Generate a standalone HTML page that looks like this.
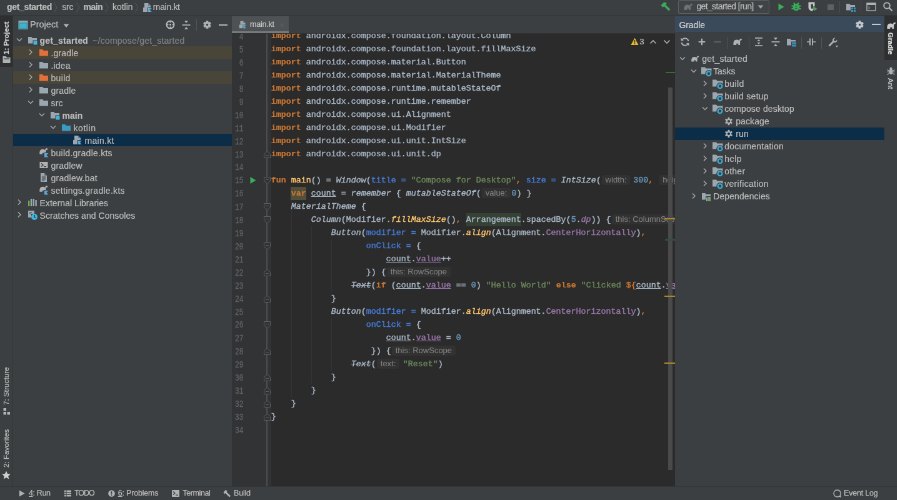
<!DOCTYPE html><html><head><meta charset="utf-8"><title>get_started - main.kt</title><style>
html,body{margin:0;padding:0;background:#3C3F41;overflow:hidden;}
body{width:897px;height:500px;position:relative;}
#r{position:absolute;left:0;top:0;width:1435.2px;height:800px;transform:scale(0.625);transform-origin:0 0;will-change:transform;background:#3C3F41;overflow:hidden;}
.ui{font-family:"Liberation Sans",sans-serif;-webkit-text-stroke:0.22px;}
.code{font-family:"Liberation Mono",monospace;font-size:13.3333px;line-height:21px;color:#A9B7C6;white-space:pre;-webkit-text-stroke:0.42px;}
.code i{font-style:italic}
.k{color:#CC7832;font-weight:bold;-webkit-text-stroke:0.15px}.c{color:#CC7832}.s{color:#6A8759}.n{color:#6897BB}.f{color:#FFC66D}.a{color:#467CDA}.p{color:#9876AA}.u{text-decoration:underline}.st{text-decoration:line-through}
.hint{display:inline-block;vertical-align:top;height:21px;}
.hb{display:inline-block;font-family:"Liberation Sans",sans-serif;font-size:13px;color:#808080;-webkit-text-stroke:0.1px;height:16px;line-height:15.5px;margin:2.2px 0 0 1.6px;padding:0 5.5px;background:#323232;border-radius:3px;vertical-align:top;}
</style></head><body><div id="r"><div id="w" style="position:absolute;left:0;top:0;width:1435.2px;height:800px;">
<div style="position:absolute;left:0px;top:0px;width:1435.2px;height:23.5px;background:#3C3F41;"></div>
<div style="position:absolute;left:0px;top:23.5px;width:1435.2px;height:1.6px;background:#323537;"></div>
<div class="ui" style="position:absolute;left:11px;top:1.0px;height:20px;line-height:20px;color:#BBBBBB;font-size:14px;white-space:pre;font-weight:bold;letter-spacing:-0.315px;">get_started</div>
<div class="ui" style="position:absolute;left:99.2px;top:1.0px;height:20px;line-height:20px;color:#BBBBBB;font-size:14px;white-space:pre;letter-spacing:-0.197px;">src</div>
<div class="ui" style="position:absolute;left:133.6px;top:1.0px;height:20px;line-height:20px;color:#BBBBBB;font-size:14px;white-space:pre;font-weight:bold;letter-spacing:-0.452px;">main</div>
<div class="ui" style="position:absolute;left:180.0px;top:1.0px;height:20px;line-height:20px;color:#BBBBBB;font-size:14px;white-space:pre;letter-spacing:-0.035px;">kotlin</div>
<div class="ui" style="position:absolute;left:244.8px;top:1.0px;height:20px;line-height:20px;color:#BBBBBB;font-size:14px;white-space:pre;letter-spacing:-0.321px;">main.kt</div>
<svg style="position:absolute;left:84.80000000000001px;top:3px;" width="8" height="18" viewBox="0 0 8 18"><path d="M1.500 1.500L6 9l-4.500 7.500" fill="none" stroke="#505355" stroke-width="1.200"/></svg>
<svg style="position:absolute;left:120.80000000000001px;top:3px;" width="8" height="18" viewBox="0 0 8 18"><path d="M1.500 1.500L6 9l-4.500 7.500" fill="none" stroke="#505355" stroke-width="1.200"/></svg>
<svg style="position:absolute;left:167.20000000000002px;top:3px;" width="8" height="18" viewBox="0 0 8 18"><path d="M1.500 1.500L6 9l-4.500 7.500" fill="none" stroke="#505355" stroke-width="1.200"/></svg>
<svg style="position:absolute;left:215.20000000000002px;top:3px;" width="8" height="18" viewBox="0 0 8 18"><path d="M1.500 1.500L6 9l-4.500 7.500" fill="none" stroke="#505355" stroke-width="1.200"/></svg>
<svg style="position:absolute;left:228.0px;top:3.5px;" width="16" height="16" viewBox="0 0 16 16"><path d="M3 1h6l4 4v3H3z" fill="#9AA7B0"/><path d="M9 1v4h4z" fill="#6d7980"/><rect x="1" y="8" width="7" height="7" fill="#9AA7B0"/><path d="M9 9h6l-3 3 3 3H9z" fill="#4A9CC9"/><path d="M9 9h3l-3 3zM9 15l3-3 0 3z" fill="#7DB8DD"/></svg>
<div style="position:absolute;left:0;top:-1px;">
<svg style="position:absolute;left:1056.0px;top:2.5px;" width="18" height="18" viewBox="0 0 18 18"><path d="M1.500 6.500L6.500 1.500l4.500 1.500L9 5.500 16.500 13l-2.500 2.500L6.500 8 4.500 9.800z" fill="#3DAA5C"/></svg>
<div style="position:absolute;left:1084.8px;top:1px;width:144.4px;height:19.500px;border:1px solid #5E6060;border-radius:2px;background:#414446;"></div>
<svg style="position:absolute;left:1092.8px;top:3.5px;" width="16" height="16" viewBox="0 0 16 16"><path d="M1.500 13C1 8 2.500 4.500 6.500 4.500C8.500 4.500 9.500 5 10.500 6C11 4 12.500 2.500 14 2.800C15.300 3.100 15.300 5 14.200 5.400C13.200 5.800 12.600 5.600 12 6.400C12.400 8 12.200 10 12 13L9.300 13L9.300 10.800L6.200 10.800L6.200 13Z" fill="#6E7173"/></svg>
<div class="ui" style="position:absolute;left:1114.4px;top:1.0px;height:20px;line-height:20px;color:#BBBBBB;font-size:14px;white-space:pre;letter-spacing:-0.633px;">get_started [run]</div>
<svg style="position:absolute;left:1211.2px;top:6.5px;" width="12" height="10" viewBox="0 0 12 10"><path d="M1.500 2.500h9L6 8z" fill="#9DA0A2"/></svg>
<svg style="position:absolute;left:1243.2px;top:3.5px;" width="14" height="16" viewBox="0 0 14 16"><path d="M2.500 2.500L11.500 8 2.500 13.500z" fill="#3BAD5A"/></svg>
<svg style="position:absolute;left:1266.4px;top:3px;" width="16" height="17" viewBox="0 0 16 17"><ellipse cx="8" cy="9.500" rx="5.300" ry="5.800" fill="#3BAD5A"/><path d="M4 2.500L6.500 5.500M12 2.500L9.500 5.500" stroke="#3BAD5A" stroke-width="2"/><path d="M0.500 7.500h3.500M12 7.500h3.500M0.500 12h3.500M12 12h3.500" stroke="#3BAD5A" stroke-width="1.900"/><rect x="6" y="7.200" width="4" height="1.300" fill="#2E6B3C"/><rect x="6" y="10.700" width="4" height="1.300" fill="#2E6B3C"/></svg>
<svg style="position:absolute;left:1292.0px;top:3px;" width="17" height="17" viewBox="0 0 17 17"><path d="M1.500 1.500h10v8.500c0 3-2.800 4.800-5 5.800C4.300 14.800 1.500 13 1.500 10z" fill="#C4C6C8"/><path d="M5.500 4.500h3.500v5c0 1.500-.8 2.300-1.800 2.900-1-.6-1.700-1.400-1.700-2.900z" fill="#3C3F41"/><path d="M10 8l6.500 4.200-6.500 4.200z" fill="#3BAD5A" stroke="#3C3F41" stroke-width="1"/></svg>
<div style="position:absolute;left:1324.0px;top:7.5px;width:9.5px;height:9.5px;background:#5E6163;"></div>
<div style="position:absolute;left:1343.2px;top:3px;width:1px;height:18px;background:#4A4D4F;"></div>
<svg style="position:absolute;left:1352.8000000000002px;top:3.5px;" width="16" height="16" viewBox="0 0 16 16"><path d="M1 3h5.2l1.6 2H15v8.5H1z" fill="#9AA7B0"/><rect x="8" y="8" width="8" height="8" fill="#3C3F41"/><rect x="9" y="9" width="3" height="3" fill="#3592C4"/><rect x="13" y="9" width="3" height="3" fill="#3592C4"/><rect x="9" y="13" width="3" height="3" fill="#3592C4"/><rect x="13" y="13" width="3" height="3" fill="#3592C4"/></svg>
<div style="position:absolute;left:1376.8000000000002px;top:3px;width:1px;height:18px;background:#4A4D4F;"></div>
<svg style="position:absolute;left:1385.6000000000001px;top:3.5px;" width="16" height="16" viewBox="0 0 16 16"><rect x="1" y="2" width="14" height="12" fill="none" stroke="#AFB1B3" stroke-width="1.400"/><rect x="1" y="2" width="14" height="3" fill="#AFB1B3"/><path d="M3.500 7.500L5.500 9.500l-2 2" stroke="#59A869" stroke-width="1.200" fill="none"/></svg>
<svg style="position:absolute;left:1412.0px;top:3px;" width="17" height="17" viewBox="0 0 17 17"><circle cx="7" cy="7" r="4.800" fill="none" stroke="#AFB1B3" stroke-width="2"/><path d="M10.500 10.500L15.500 15.500" stroke="#AFB1B3" stroke-width="2.400"/></svg>
</div>
<div style="position:absolute;left:0px;top:25px;width:20px;height:753.5px;background:#3C3F41;"></div>
<div style="position:absolute;left:20px;top:25px;width:1px;height:753.5px;background:#323232;"></div>
<div style="position:absolute;left:0px;top:25px;width:20px;height:81.5px;background:#2D2F30;"></div>
<div class="ui" style="position:absolute;left:10px;top:86.5px;height:20px;line-height:20px;margin-top:-10px;transform-origin:0 50%;transform:rotate(-90deg);color:#D0D0D0;font-size:11.5px;white-space:pre;font-weight:bold;">1: Project</div>
<svg style="position:absolute;left:3.5px;top:89px;" width="13" height="12" viewBox="0 0 13 12"><path d="M0.500 1h5l1.500 2H12.500v9H0.500z" fill="#AFB1B3"/><rect x="2" y="4.500" width="9" height="1.200" fill="#2D2F30"/></svg>
<div class="ui" style="position:absolute;left:10px;top:648px;height:20px;line-height:20px;margin-top:-10px;transform-origin:0 50%;transform:rotate(-90deg);color:#BBBBBB;font-size:11.5px;white-space:pre;letter-spacing:0.1px;">7: Structure</div>
<svg style="position:absolute;left:4.5px;top:652.5px;" width="11" height="11" viewBox="0 0 11 11"><rect x="0.500" y="0" width="4.500" height="4.500" fill="#AFB1B3"/><rect x="0.500" y="6" width="4.500" height="4.500" fill="#AFB1B3"/><rect x="6.500" y="6" width="4.500" height="4.500" fill="#AFB1B3"/></svg>
<div class="ui" style="position:absolute;left:10px;top:748px;height:20px;line-height:20px;margin-top:-10px;transform-origin:0 50%;transform:rotate(-90deg);color:#BBBBBB;font-size:11.5px;white-space:pre;letter-spacing:0.1px;">2: Favorites</div>
<svg style="position:absolute;left:3px;top:752.5px;" width="14" height="14" viewBox="0 0 14 14"><path d="M7 0.500l2 4.500 4.800.5-3.600 3.200 1 4.800L7 11l-4.200 2.500 1-4.800L0.200 5.500 5 5z" fill="#D0D0D0"/></svg>
<div style="position:absolute;left:21px;top:25px;width:350.2px;height:753.5px;background:#3C3F41;"></div>
<svg style="position:absolute;left:28.5px;top:31.5px;" width="16" height="16" viewBox="0 0 16 16"><rect x="1" y="1.500" width="14" height="13" fill="#3592A8"/><rect x="1" y="1.500" width="14" height="2.500" fill="#9AA7B0"/><rect x="2.500" y="5.500" width="11" height="7.500" fill="#3FB2CC"/><rect x="1" y="1.500" width="14" height="13" fill="none" stroke="#7FB7C6" stroke-width="1"/></svg>
<div class="ui" style="position:absolute;left:48px;top:29px;height:20px;line-height:20px;color:#BBBBBB;font-size:14.5px;white-space:pre;letter-spacing:0.02px;">Project</div>
<svg style="position:absolute;left:100px;top:35.5px;" width="12" height="10" viewBox="0 0 12 10"><path d="M1.500 2.500h9L6 8z" fill="#AFB1B3"/></svg>
<svg style="position:absolute;left:263.5px;top:31px;" width="17" height="17" viewBox="0 0 17 17"><circle cx="8.500" cy="8.500" r="6" fill="none" stroke="#B8BABC" stroke-width="2"/><circle cx="8.500" cy="8.500" r="1.400" fill="#B8BABC"/><path d="M8.500 2v3.500M8.500 11.500v3.500M2 8.500h3.500M11.500 8.500h3.500" stroke="#B8BABC" stroke-width="1.700"/></svg>
<svg style="position:absolute;left:290.40000000000003px;top:31.5px;" width="16" height="16" viewBox="0 0 16 16"><path d="M1.500 8h13" stroke="#AFB1B3" stroke-width="1.700"/><path d="M5 1.200h6L8 5zM5 14.800h6L8 11z" fill="#AFB1B3"/></svg>
<div style="position:absolute;left:314.08000000000004px;top:30px;width:1px;height:19px;background:#515456;"></div>
<svg style="position:absolute;left:323.8px;top:31.7px;" width="15" height="15" viewBox="0 0 16 16"><rect x="6.0" y="1.3" width="4.0" height="4" transform="rotate(0 8 8)" fill="#AFB1B3"/><rect x="6.0" y="1.3" width="4.0" height="4" transform="rotate(60 8 8)" fill="#AFB1B3"/><rect x="6.0" y="1.3" width="4.0" height="4" transform="rotate(120 8 8)" fill="#AFB1B3"/><rect x="6.0" y="1.3" width="4.0" height="4" transform="rotate(180 8 8)" fill="#AFB1B3"/><rect x="6.0" y="1.3" width="4.0" height="4" transform="rotate(240 8 8)" fill="#AFB1B3"/><rect x="6.0" y="1.3" width="4.0" height="4" transform="rotate(300 8 8)" fill="#AFB1B3"/><circle cx="8" cy="8" r="5.2" fill="#AFB1B3"/><circle cx="8" cy="8" r="1.8" fill="#3C3F41"/></svg>
<div style="position:absolute;left:350.08000000000004px;top:38.8px;width:14px;height:1.8px;background:#AFB1B3;"></div>
<svg style="position:absolute;left:23.200000000000003px;top:56.4px;" width="16" height="16" viewBox="0 0 16 16"><path d="M4 5.500L8 9.500l4-4" fill="none" stroke="#A4A7A9" stroke-width="1.500"/></svg>
<svg style="position:absolute;left:44.2px;top:55.8px;" width="16" height="16" viewBox="0 0 16 16"><path d="M1 3h5.2l1.6 2H15v8.5H1z" fill="#9AA7B0"/><rect x="8.5" y="8.5" width="7" height="7" fill="#3C3F41"/><rect x="9.5" y="9.5" width="6" height="6" fill="#40B6E0"/></svg>
<div class="ui" style="position:absolute;left:63.5px;top:54.6px;height:20px;line-height:20px;color:#BBBBBB;font-size:14px;white-space:pre;font-weight:bold;letter-spacing:0.194px;">get_started</div>
<div class="ui" style="position:absolute;left:148.3px;top:54.6px;height:20px;line-height:20px;color:#808080;font-size:14px;white-space:pre;letter-spacing:0.209px;">~/compose/get_started</div>
<div style="position:absolute;left:21px;top:74.4px;width:350.2px;height:20px;background:#4A4539;"></div>
<svg style="position:absolute;left:41.2px;top:76.4px;" width="16" height="16" viewBox="0 0 16 16"><path d="M6 3.500L10 7.500l-4 4" fill="none" stroke="#A4A7A9" stroke-width="1.500"/></svg>
<svg style="position:absolute;left:62.2px;top:75.80000000000001px;" width="16" height="16" viewBox="0 0 16 16"><path d="M1 3h5.2l1.6 2H15v8.5H1z" fill="#E2703A"/></svg>
<div class="ui" style="position:absolute;left:81.5px;top:74.60000000000001px;height:20px;line-height:20px;color:#BBBBBB;font-size:14px;white-space:pre;letter-spacing:0.17px;">.gradle</div>
<svg style="position:absolute;left:41.2px;top:96.4px;" width="16" height="16" viewBox="0 0 16 16"><path d="M6 3.500L10 7.500l-4 4" fill="none" stroke="#A4A7A9" stroke-width="1.500"/></svg>
<svg style="position:absolute;left:62.2px;top:95.80000000000001px;" width="16" height="16" viewBox="0 0 16 16"><path d="M1 3h5.2l1.6 2H15v8.5H1z" fill="#9AA7B0"/></svg>
<div class="ui" style="position:absolute;left:81.5px;top:94.60000000000001px;height:20px;line-height:20px;color:#BBBBBB;font-size:14px;white-space:pre;letter-spacing:0.168px;">.idea</div>
<div style="position:absolute;left:21px;top:114.4px;width:350.2px;height:20px;background:#4A4539;"></div>
<svg style="position:absolute;left:41.2px;top:116.4px;" width="16" height="16" viewBox="0 0 16 16"><path d="M6 3.500L10 7.500l-4 4" fill="none" stroke="#A4A7A9" stroke-width="1.500"/></svg>
<svg style="position:absolute;left:62.2px;top:115.80000000000001px;" width="16" height="16" viewBox="0 0 16 16"><path d="M1 3h5.2l1.6 2H15v8.5H1z" fill="#E2703A"/></svg>
<div class="ui" style="position:absolute;left:81.5px;top:114.60000000000001px;height:20px;line-height:20px;color:#BBBBBB;font-size:14px;white-space:pre;letter-spacing:0.321px;">build</div>
<svg style="position:absolute;left:41.2px;top:136.4px;" width="16" height="16" viewBox="0 0 16 16"><path d="M6 3.500L10 7.500l-4 4" fill="none" stroke="#A4A7A9" stroke-width="1.500"/></svg>
<svg style="position:absolute;left:62.2px;top:135.8px;" width="16" height="16" viewBox="0 0 16 16"><path d="M1 3h5.2l1.6 2H15v8.5H1z" fill="#9AA7B0"/></svg>
<div class="ui" style="position:absolute;left:81.5px;top:134.6px;height:20px;line-height:20px;color:#BBBBBB;font-size:14px;white-space:pre;letter-spacing:0.18px;">gradle</div>
<svg style="position:absolute;left:41.2px;top:156.4px;" width="16" height="16" viewBox="0 0 16 16"><path d="M4 5.500L8 9.500l4-4" fill="none" stroke="#A4A7A9" stroke-width="1.500"/></svg>
<svg style="position:absolute;left:62.2px;top:155.8px;" width="16" height="16" viewBox="0 0 16 16"><path d="M1 3h5.2l1.6 2H15v8.5H1z" fill="#9AA7B0"/></svg>
<div class="ui" style="position:absolute;left:81.5px;top:154.6px;height:20px;line-height:20px;color:#BBBBBB;font-size:14px;white-space:pre;letter-spacing:0.176px;">src</div>
<svg style="position:absolute;left:59.2px;top:176.4px;" width="16" height="16" viewBox="0 0 16 16"><path d="M4 5.500L8 9.500l4-4" fill="none" stroke="#A4A7A9" stroke-width="1.500"/></svg>
<svg style="position:absolute;left:80.2px;top:175.8px;" width="16" height="16" viewBox="0 0 16 16"><path d="M1 3h5.2l1.6 2H15v8.5H1z" fill="#9AA7B0"/><rect x="8.5" y="8.5" width="7" height="7" fill="#3C3F41"/><rect x="9.5" y="9.5" width="6" height="6" fill="#40B6E0"/></svg>
<div class="ui" style="position:absolute;left:99.5px;top:174.6px;height:20px;line-height:20px;color:#BBBBBB;font-size:14px;white-space:pre;font-weight:bold;letter-spacing:0.028px;">main</div>
<svg style="position:absolute;left:77.2px;top:196.4px;" width="16" height="16" viewBox="0 0 16 16"><path d="M4 5.500L8 9.500l4-4" fill="none" stroke="#A4A7A9" stroke-width="1.500"/></svg>
<svg style="position:absolute;left:98.2px;top:195.8px;" width="16" height="16" viewBox="0 0 16 16"><path d="M1 3h5.2l1.6 2H15v8.5H1z" fill="#3A9BC2"/></svg>
<div class="ui" style="position:absolute;left:117.5px;top:194.6px;height:20px;line-height:20px;color:#BBBBBB;font-size:14px;white-space:pre;letter-spacing:0.552px;">kotlin</div>
<div style="position:absolute;left:21px;top:214.4px;width:350.2px;height:20px;background:#0C2D48;"></div>
<svg style="position:absolute;left:116.2px;top:215.8px;" width="16" height="16" viewBox="0 0 16 16"><path d="M3 1h6l4 4v3H3z" fill="#9AA7B0"/><path d="M9 1v4h4z" fill="#6d7980"/><rect x="1" y="8" width="7" height="7" fill="#9AA7B0"/><path d="M9 9h6l-3 3 3 3H9z" fill="#4A9CC9"/><path d="M9 9h3l-3 3zM9 15l3-3 0 3z" fill="#7DB8DD"/></svg>
<div class="ui" style="position:absolute;left:135.5px;top:214.6px;height:20px;line-height:20px;color:#BBBBBB;font-size:14px;white-space:pre;letter-spacing:0.296px;">main.kt</div>
<svg style="position:absolute;left:62.2px;top:235.8px;" width="16" height="16" viewBox="0 0 16 16"><g transform="translate(0 -1.500) scale(0.95)"><path d="M1.500 13C1 8 2.500 4.500 6.500 4.500C8.500 4.500 9.500 5 10.500 6C11 4 12.500 2.500 14 2.800C15.300 3.100 15.300 5 14.200 5.400C13.200 5.800 12.600 5.600 12 6.400C12.400 8 12.200 10 12 13L9.300 13L9.300 10.800L6.200 10.800L6.200 13Z" fill="#AFB1B3"/></g><rect x="8" y="8" width="8" height="8" fill="#3C3F41"/><path d="M9 9h6.500l-3.200 3.200 3.200 3.300H9z" fill="#5AA7D8"/></svg>
<div class="ui" style="position:absolute;left:81.5px;top:234.6px;height:20px;line-height:20px;color:#BBBBBB;font-size:14px;white-space:pre;letter-spacing:0.264px;">build.gradle.kts</div>
<svg style="position:absolute;left:62.2px;top:255.8px;" width="16" height="16" viewBox="0 0 16 16"><rect x="1.5" y="3" width="13" height="10" fill="#AFB1B3"/><path d="M4 5.500L7 8l-3 2.500" stroke="#3C3F41" stroke-width="1.500" fill="none"/><rect x="8" y="10" width="4" height="1.300" fill="#3C3F41"/></svg>
<div class="ui" style="position:absolute;left:81.5px;top:254.6px;height:20px;line-height:20px;color:#BBBBBB;font-size:14px;white-space:pre;letter-spacing:0.196px;">gradlew</div>
<svg style="position:absolute;left:62.2px;top:275.79999999999995px;" width="16" height="16" viewBox="0 0 16 16"><path d="M3 1h6l4 4v10H3z" fill="#9AA7B0"/><path d="M9 1v4h4z" fill="#5f6b72"/><path d="M5 7h6M5 9h6M5 11h6M5 13h4" stroke="#3C3F41" stroke-width="1"/></svg>
<div class="ui" style="position:absolute;left:81.5px;top:274.59999999999997px;height:20px;line-height:20px;color:#BBBBBB;font-size:14px;white-space:pre;letter-spacing:0.254px;">gradlew.bat</div>
<svg style="position:absolute;left:62.2px;top:295.79999999999995px;" width="16" height="16" viewBox="0 0 16 16"><g transform="translate(0 -1.500) scale(0.95)"><path d="M1.500 13C1 8 2.500 4.500 6.500 4.500C8.500 4.500 9.500 5 10.500 6C11 4 12.500 2.500 14 2.800C15.300 3.100 15.300 5 14.200 5.400C13.200 5.800 12.600 5.600 12 6.400C12.400 8 12.200 10 12 13L9.300 13L9.300 10.800L6.200 10.800L6.200 13Z" fill="#AFB1B3"/></g><rect x="8" y="8" width="8" height="8" fill="#3C3F41"/><path d="M9 9h6.500l-3.200 3.200 3.200 3.300H9z" fill="#5AA7D8"/></svg>
<div class="ui" style="position:absolute;left:81.5px;top:294.59999999999997px;height:20px;line-height:20px;color:#BBBBBB;font-size:14px;white-space:pre;letter-spacing:0.292px;">settings.gradle.kts</div>
<svg style="position:absolute;left:23.200000000000003px;top:316.4px;" width="16" height="16" viewBox="0 0 16 16"><path d="M6 3.500L10 7.500l-4 4" fill="none" stroke="#A4A7A9" stroke-width="1.500"/></svg>
<svg style="position:absolute;left:44.2px;top:315.79999999999995px;" width="16" height="16" viewBox="0 0 16 16"><rect x="1" y="5" width="2.400" height="9" fill="#62B543"/><rect x="4.800" y="2" width="2.400" height="12" fill="#9AA7B0"/><rect x="8.600" y="2" width="2.400" height="12" fill="#9AA7B0"/><rect x="12.400" y="4" width="2.400" height="10" fill="#9AA7B0"/></svg>
<div class="ui" style="position:absolute;left:63.5px;top:314.59999999999997px;height:20px;line-height:20px;color:#BBBBBB;font-size:14px;white-space:pre;letter-spacing:0.037px;">External Libraries</div>
<svg style="position:absolute;left:23.200000000000003px;top:336.4px;" width="16" height="16" viewBox="0 0 16 16"><path d="M6 3.500L10 7.500l-4 4" fill="none" stroke="#A4A7A9" stroke-width="1.500"/></svg>
<svg style="position:absolute;left:44.2px;top:335.79999999999995px;" width="16" height="16" viewBox="0 0 16 16"><path d="M1 1h10v5H6v6H1z" fill="#9AA7B0"/><path d="M3 3.500h4M3 6h2" stroke="#3C3F41" stroke-width="1.200"/><circle cx="11" cy="11" r="5" fill="#40B6E0"/><path d="M11 8v3.300l2 1.200" stroke="#2b2b2b" stroke-width="1.300" fill="none"/></svg>
<div class="ui" style="position:absolute;left:63.5px;top:334.59999999999997px;height:20px;line-height:20px;color:#BBBBBB;font-size:14px;white-space:pre;letter-spacing:0.047px;">Scratches and Consoles</div>
<div style="position:absolute;left:371.2px;top:25px;width:708.8px;height:28px;background:#3C3F41;"></div>
<div style="position:absolute;left:371.2px;top:52.6px;width:708.8px;height:1px;background:#323232;"></div>
<div style="position:absolute;left:371px;top:25.8px;width:91px;height:27px;background:#4E5254;"></div>
<div style="position:absolute;left:371px;top:49.8px;width:91px;height:3px;background:#747A80;"></div>
<svg style="position:absolute;left:381.5px;top:32.5px;" width="13" height="13" viewBox="0 0 16 16"><path d="M3 1h6l4 4v3H3z" fill="#9AA7B0"/><path d="M9 1v4h4z" fill="#6d7980"/><rect x="1" y="8" width="7" height="7" fill="#9AA7B0"/><path d="M9 9h6l-3 3 3 3H9z" fill="#4A9CC9"/><path d="M9 9h3l-3 3zM9 15l3-3 0 3z" fill="#7DB8DD"/></svg>
<div class="ui" style="position:absolute;left:400px;top:28.5px;height:20px;line-height:20px;color:#C8C8C8;font-size:12.5px;white-space:pre;letter-spacing:-0.202px;">main.kt</div>
<svg style="position:absolute;left:447px;top:35.5px;" width="8" height="8" viewBox="0 0 8 8"><path d="M1.500 1.500l5 5M6.500 1.500l-5 5" stroke="#5E6366" stroke-width="1"/></svg>
<div style="position:absolute;left:371.2px;top:53.6px;width:708.8px;height:724.9px;background:#2B2B2B;"></div>
<div id="ed" style="position:absolute;left:371.2px;top:53.6px;width:708.8px;height:724.9px;overflow:hidden;">
<div style="position:absolute;left:0.0px;top:0.0px;width:62.400000000000034px;height:724.9px;background:#313335;"></div>
<div style="position:absolute;left:55.0px;top:0.0px;width:1.6px;height:724.9px;background:#4C4E50;"></div>
<div class="code" style="position:absolute;left:0.8000000000000114px;top:-6.800000000000004px;width:17.600000000000023px;text-align:right;color:#606367;font-size:11.300px;-webkit-text-stroke:0.25px;transform:translateY(1.700px) scaleY(1.320);">4</div>
<div class="code" style="position:absolute;left:0.8000000000000114px;top:14.199999999999996px;width:17.600000000000023px;text-align:right;color:#606367;font-size:11.300px;-webkit-text-stroke:0.25px;transform:translateY(1.700px) scaleY(1.320);">5</div>
<div class="code" style="position:absolute;left:0.8000000000000114px;top:35.199999999999996px;width:17.600000000000023px;text-align:right;color:#606367;font-size:11.300px;-webkit-text-stroke:0.25px;transform:translateY(1.700px) scaleY(1.320);">6</div>
<div class="code" style="position:absolute;left:0.8000000000000114px;top:56.199999999999996px;width:17.600000000000023px;text-align:right;color:#606367;font-size:11.300px;-webkit-text-stroke:0.25px;transform:translateY(1.700px) scaleY(1.320);">7</div>
<div class="code" style="position:absolute;left:0.8000000000000114px;top:77.20000000000002px;width:17.600000000000023px;text-align:right;color:#606367;font-size:11.300px;-webkit-text-stroke:0.25px;transform:translateY(1.700px) scaleY(1.320);">8</div>
<div class="code" style="position:absolute;left:0.8000000000000114px;top:98.20000000000002px;width:17.600000000000023px;text-align:right;color:#606367;font-size:11.300px;-webkit-text-stroke:0.25px;transform:translateY(1.700px) scaleY(1.320);">9</div>
<div class="code" style="position:absolute;left:0.8000000000000114px;top:119.20000000000002px;width:17.600000000000023px;text-align:right;color:#606367;font-size:11.300px;-webkit-text-stroke:0.25px;transform:translateY(1.700px) scaleY(1.320);">10</div>
<div class="code" style="position:absolute;left:0.8000000000000114px;top:140.20000000000002px;width:17.600000000000023px;text-align:right;color:#606367;font-size:11.300px;-webkit-text-stroke:0.25px;transform:translateY(1.700px) scaleY(1.320);">11</div>
<div class="code" style="position:absolute;left:0.8000000000000114px;top:161.20000000000002px;width:17.600000000000023px;text-align:right;color:#606367;font-size:11.300px;-webkit-text-stroke:0.25px;transform:translateY(1.700px) scaleY(1.320);">12</div>
<div class="code" style="position:absolute;left:0.8000000000000114px;top:182.20000000000002px;width:17.600000000000023px;text-align:right;color:#606367;font-size:11.300px;-webkit-text-stroke:0.25px;transform:translateY(1.700px) scaleY(1.320);">13</div>
<div class="code" style="position:absolute;left:0.8000000000000114px;top:203.20000000000002px;width:17.600000000000023px;text-align:right;color:#606367;font-size:11.300px;-webkit-text-stroke:0.25px;transform:translateY(1.700px) scaleY(1.320);">14</div>
<div class="code" style="position:absolute;left:0.8000000000000114px;top:224.20000000000002px;width:17.600000000000023px;text-align:right;color:#606367;font-size:11.300px;-webkit-text-stroke:0.25px;transform:translateY(1.700px) scaleY(1.320);">15</div>
<div class="code" style="position:absolute;left:0.8000000000000114px;top:245.20000000000002px;width:17.600000000000023px;text-align:right;color:#606367;font-size:11.300px;-webkit-text-stroke:0.25px;transform:translateY(1.700px) scaleY(1.320);">16</div>
<div class="code" style="position:absolute;left:0.8000000000000114px;top:266.2px;width:17.600000000000023px;text-align:right;color:#606367;font-size:11.300px;-webkit-text-stroke:0.25px;transform:translateY(1.700px) scaleY(1.320);">17</div>
<div class="code" style="position:absolute;left:0.8000000000000114px;top:287.2px;width:17.600000000000023px;text-align:right;color:#606367;font-size:11.300px;-webkit-text-stroke:0.25px;transform:translateY(1.700px) scaleY(1.320);">18</div>
<div class="code" style="position:absolute;left:0.8000000000000114px;top:308.2px;width:17.600000000000023px;text-align:right;color:#606367;font-size:11.300px;-webkit-text-stroke:0.25px;transform:translateY(1.700px) scaleY(1.320);">19</div>
<div class="code" style="position:absolute;left:0.8000000000000114px;top:329.2px;width:17.600000000000023px;text-align:right;color:#606367;font-size:11.300px;-webkit-text-stroke:0.25px;transform:translateY(1.700px) scaleY(1.320);">20</div>
<div class="code" style="position:absolute;left:0.8000000000000114px;top:350.2px;width:17.600000000000023px;text-align:right;color:#606367;font-size:11.300px;-webkit-text-stroke:0.25px;transform:translateY(1.700px) scaleY(1.320);">21</div>
<div class="code" style="position:absolute;left:0.8000000000000114px;top:371.2px;width:17.600000000000023px;text-align:right;color:#606367;font-size:11.300px;-webkit-text-stroke:0.25px;transform:translateY(1.700px) scaleY(1.320);">22</div>
<div class="code" style="position:absolute;left:0.8000000000000114px;top:392.2px;width:17.600000000000023px;text-align:right;color:#606367;font-size:11.300px;-webkit-text-stroke:0.25px;transform:translateY(1.700px) scaleY(1.320);">23</div>
<div class="code" style="position:absolute;left:0.8000000000000114px;top:413.2px;width:17.600000000000023px;text-align:right;color:#606367;font-size:11.300px;-webkit-text-stroke:0.25px;transform:translateY(1.700px) scaleY(1.320);">24</div>
<div class="code" style="position:absolute;left:0.8000000000000114px;top:434.2px;width:17.600000000000023px;text-align:right;color:#606367;font-size:11.300px;-webkit-text-stroke:0.25px;transform:translateY(1.700px) scaleY(1.320);">25</div>
<div class="code" style="position:absolute;left:0.8000000000000114px;top:455.2px;width:17.600000000000023px;text-align:right;color:#606367;font-size:11.300px;-webkit-text-stroke:0.25px;transform:translateY(1.700px) scaleY(1.320);">26</div>
<div class="code" style="position:absolute;left:0.8000000000000114px;top:476.19999999999993px;width:17.600000000000023px;text-align:right;color:#606367;font-size:11.300px;-webkit-text-stroke:0.25px;transform:translateY(1.700px) scaleY(1.320);">27</div>
<div class="code" style="position:absolute;left:0.8000000000000114px;top:497.19999999999993px;width:17.600000000000023px;text-align:right;color:#606367;font-size:11.300px;-webkit-text-stroke:0.25px;transform:translateY(1.700px) scaleY(1.320);">28</div>
<div class="code" style="position:absolute;left:0.8000000000000114px;top:518.1999999999999px;width:17.600000000000023px;text-align:right;color:#606367;font-size:11.300px;-webkit-text-stroke:0.25px;transform:translateY(1.700px) scaleY(1.320);">29</div>
<div class="code" style="position:absolute;left:0.8000000000000114px;top:539.1999999999999px;width:17.600000000000023px;text-align:right;color:#606367;font-size:11.300px;-webkit-text-stroke:0.25px;transform:translateY(1.700px) scaleY(1.320);">30</div>
<div class="code" style="position:absolute;left:0.8000000000000114px;top:560.1999999999999px;width:17.600000000000023px;text-align:right;color:#606367;font-size:11.300px;-webkit-text-stroke:0.25px;transform:translateY(1.700px) scaleY(1.320);">31</div>
<div class="code" style="position:absolute;left:0.8000000000000114px;top:581.1999999999999px;width:17.600000000000023px;text-align:right;color:#606367;font-size:11.300px;-webkit-text-stroke:0.25px;transform:translateY(1.700px) scaleY(1.320);">32</div>
<div class="code" style="position:absolute;left:0.8000000000000114px;top:602.1999999999999px;width:17.600000000000023px;text-align:right;color:#606367;font-size:11.300px;-webkit-text-stroke:0.25px;transform:translateY(1.700px) scaleY(1.320);">33</div>
<div class="code" style="position:absolute;left:0.8000000000000114px;top:623.1999999999999px;width:17.600000000000023px;text-align:right;color:#606367;font-size:11.300px;-webkit-text-stroke:0.25px;transform:translateY(1.700px) scaleY(1.320);">34</div>
<svg style="position:absolute;left:28.30000000000001px;top:228.20000000000002px" width="12" height="13" viewBox="0 0 12 13"><path d="M1.500 1L10.500 6.500 1.500 12z" fill="#3BAD5A"/></svg>
<svg style="position:absolute;left:50.60000000000002px;top:187.20000000000002px" width="11" height="12" viewBox="0 0 11 12"><path d="M0.500 11.500h10v-6l-5-4.500-5 4.500z" fill="#313335" stroke="#5C5F62" stroke-width="1"/><path d="M3 7.5h5" stroke="#5C5F62" stroke-width="1"/></svg>
<svg style="position:absolute;left:50.60000000000002px;top:229.20000000000002px" width="11" height="12" viewBox="0 0 11 12"><path d="M0.500 0.500h10v6l-5 4.500-5-4.500z" fill="#313335" stroke="#5C5F62" stroke-width="1"/><path d="M3 4.5h5" stroke="#5C5F62" stroke-width="1"/></svg>
<svg style="position:absolute;left:50.60000000000002px;top:271.2px" width="11" height="12" viewBox="0 0 11 12"><path d="M0.500 0.500h10v6l-5 4.500-5-4.500z" fill="#313335" stroke="#5C5F62" stroke-width="1"/><path d="M3 4.5h5" stroke="#5C5F62" stroke-width="1"/></svg>
<svg style="position:absolute;left:50.60000000000002px;top:292.2px" width="11" height="12" viewBox="0 0 11 12"><path d="M0.500 0.500h10v6l-5 4.500-5-4.500z" fill="#313335" stroke="#5C5F62" stroke-width="1"/><path d="M3 4.5h5" stroke="#5C5F62" stroke-width="1"/></svg>
<svg style="position:absolute;left:50.60000000000002px;top:334.2px" width="11" height="12" viewBox="0 0 11 12"><path d="M0.500 0.500h10v6l-5 4.500-5-4.500z" fill="#313335" stroke="#5C5F62" stroke-width="1"/><path d="M3 4.5h5" stroke="#5C5F62" stroke-width="1"/></svg>
<svg style="position:absolute;left:50.60000000000002px;top:376.2px" width="11" height="12" viewBox="0 0 11 12"><path d="M0.500 11.500h10v-6l-5-4.500-5 4.500z" fill="#313335" stroke="#5C5F62" stroke-width="1"/><path d="M3 7.5h5" stroke="#5C5F62" stroke-width="1"/></svg>
<svg style="position:absolute;left:50.60000000000002px;top:418.2px" width="11" height="12" viewBox="0 0 11 12"><path d="M0.500 11.500h10v-6l-5-4.500-5 4.500z" fill="#313335" stroke="#5C5F62" stroke-width="1"/><path d="M3 7.5h5" stroke="#5C5F62" stroke-width="1"/></svg>
<svg style="position:absolute;left:50.60000000000002px;top:460.19999999999993px" width="11" height="12" viewBox="0 0 11 12"><path d="M0.500 0.500h10v6l-5 4.500-5-4.500z" fill="#313335" stroke="#5C5F62" stroke-width="1"/><path d="M3 4.5h5" stroke="#5C5F62" stroke-width="1"/></svg>
<svg style="position:absolute;left:50.60000000000002px;top:502.19999999999993px" width="11" height="12" viewBox="0 0 11 12"><path d="M0.500 11.500h10v-6l-5-4.500-5 4.500z" fill="#313335" stroke="#5C5F62" stroke-width="1"/><path d="M3 7.5h5" stroke="#5C5F62" stroke-width="1"/></svg>
<svg style="position:absolute;left:50.60000000000002px;top:544.1999999999999px" width="11" height="12" viewBox="0 0 11 12"><path d="M0.500 11.500h10v-6l-5-4.500-5 4.500z" fill="#313335" stroke="#5C5F62" stroke-width="1"/><path d="M3 7.5h5" stroke="#5C5F62" stroke-width="1"/></svg>
<svg style="position:absolute;left:50.60000000000002px;top:565.1999999999999px" width="11" height="12" viewBox="0 0 11 12"><path d="M0.500 11.500h10v-6l-5-4.500-5 4.500z" fill="#313335" stroke="#5C5F62" stroke-width="1"/><path d="M3 7.5h5" stroke="#5C5F62" stroke-width="1"/></svg>
<svg style="position:absolute;left:50.60000000000002px;top:586.1999999999999px" width="11" height="12" viewBox="0 0 11 12"><path d="M0.500 11.500h10v-6l-5-4.500-5 4.500z" fill="#313335" stroke="#5C5F62" stroke-width="1"/><path d="M3 7.5h5" stroke="#5C5F62" stroke-width="1"/></svg>
<svg style="position:absolute;left:50.60000000000002px;top:607.1999999999999px" width="11" height="12" viewBox="0 0 11 12"><path d="M0.500 11.500h10v-6l-5-4.500-5 4.500z" fill="#313335" stroke="#5C5F62" stroke-width="1"/><path d="M3 7.5h5" stroke="#5C5F62" stroke-width="1"/></svg>
<div style="position:absolute;left:94.0px;top:245.20000000000002px;width:24.5px;height:21px;background:#52503A;"></div>
<div style="position:absolute;left:374.50000000000006px;top:287.2px;width:88px;height:21px;background:#344134;"></div>
<div style="position:absolute;left:95.0px;top:266.2px;width:1px;height:314.99999999999994px;background:#343434;"></div>
<div style="position:absolute;left:127.0px;top:308.2px;width:1px;height:251.99999999999994px;background:#343434;"></div>
<div style="position:absolute;left:159.00000000000006px;top:329.2px;width:1px;height:84.0px;background:#343434;"></div>
<div style="position:absolute;left:159.00000000000006px;top:455.2px;width:1px;height:83.99999999999994px;background:#343434;"></div>
<div class="code" style="position:absolute;left:62.5px;top:-6.800000000000004px;height:21px;"><span class="k">import</span> androidx.compose.foundation.layout.Column</div>
<div class="code" style="position:absolute;left:62.5px;top:14.199999999999996px;height:21px;"><span class="k">import</span> androidx.compose.foundation.layout.fillMaxSize</div>
<div class="code" style="position:absolute;left:62.5px;top:35.199999999999996px;height:21px;"><span class="k">import</span> androidx.compose.material.Button</div>
<div class="code" style="position:absolute;left:62.5px;top:56.199999999999996px;height:21px;"><span class="k">import</span> androidx.compose.material.MaterialTheme</div>
<div class="code" style="position:absolute;left:62.5px;top:77.20000000000002px;height:21px;"><span class="k">import</span> androidx.compose.runtime.mutableStateOf</div>
<div class="code" style="position:absolute;left:62.5px;top:98.20000000000002px;height:21px;"><span class="k">import</span> androidx.compose.runtime.remember</div>
<div class="code" style="position:absolute;left:62.5px;top:119.20000000000002px;height:21px;"><span class="k">import</span> androidx.compose.ui.Alignment</div>
<div class="code" style="position:absolute;left:62.5px;top:140.20000000000002px;height:21px;"><span class="k">import</span> androidx.compose.ui.Modifier</div>
<div class="code" style="position:absolute;left:62.5px;top:161.20000000000002px;height:21px;"><span class="k">import</span> androidx.compose.ui.unit.IntSize</div>
<div class="code" style="position:absolute;left:62.5px;top:182.20000000000002px;height:21px;"><span class="k">import</span> androidx.compose.ui.unit.dp</div>
<div class="code" style="position:absolute;left:62.5px;top:203.20000000000002px;height:21px;"></div>
<div class="code" style="position:absolute;left:62.5px;top:224.20000000000002px;height:21px;"><span class="k">fun</span> <span class="f">main</span>() = <i>Window</i>(<span class="a">title =</span> <span class="s">"Compose for Desktop"</span><span class="c">,</span> <span class="a">size =</span> <i>IntSize</i>(<span class="hint" style="width:51.6px"><span class="hb">width:</span></span><span class="n">300</span><span class="c">,</span> <span class="hint" style="width:56px"><span class="hb">height:</span></span><span class="n">300</span>)) {</div>
<div class="code" style="position:absolute;left:62.5px;top:245.20000000000002px;height:21px;">    <span class="k">var</span> <span class="u">count</span> = <i>remember</i> { <i>mutableStateOf</i>(<span class="hint" style="width:48.8px"><span class="hb">value:</span></span><span class="n">0</span>) }</div>
<div class="code" style="position:absolute;left:62.5px;top:266.2px;height:21px;">    <i>MaterialTheme</i> {</div>
<div class="code" style="position:absolute;left:62.5px;top:287.2px;height:21px;">        <i>Column</i>(Modifier.<i class="f">fillMaxSize</i>()<span class="c">,</span> Arrangement.spacedBy(<span class="n">5</span>.<i class="p">dp</i>)) {<span class="hint" style="width:118px"><span class="hb">this: ColumnScope</span></span></div>
<div class="code" style="position:absolute;left:62.5px;top:308.2px;height:21px;">            <i>Button</i>(<span class="a">modifier =</span> Modifier.<i class="f">align</i>(Alignment.<span class="p">CenterHorizontally</span>)<span class="c">,</span></div>
<div class="code" style="position:absolute;left:62.5px;top:329.2px;height:21px;">                   <span class="a">onClick =</span> {</div>
<div class="code" style="position:absolute;left:62.5px;top:350.2px;height:21px;">                       <span class="u">count</span>.<span class="p u">value</span>++</div>
<div class="code" style="position:absolute;left:62.5px;top:371.2px;height:21px;">                   }) {<span class="hint" style="width:104px"><span class="hb">this: RowScope</span></span></div>
<div class="code" style="position:absolute;left:62.5px;top:392.2px;height:21px;">                <i class="st">Text</i>(<span class="k">if</span> (<span class="u">count</span>.<span class="p u">value</span> == <span class="n">0</span>) <span class="s">"Hello World"</span> <span class="k">else</span> <span class="s">"Clicked </span><span class="c">${</span><span class="u">count</span>.<span class="p u">value</span><span class="c">}</span><span class="s">!"</span>)</div>
<div class="code" style="position:absolute;left:62.5px;top:413.2px;height:21px;">            }</div>
<div class="code" style="position:absolute;left:62.5px;top:434.2px;height:21px;">            <i>Button</i>(<span class="a">modifier =</span> Modifier.<i class="f">align</i>(Alignment.<span class="p">CenterHorizontally</span>)<span class="c">,</span></div>
<div class="code" style="position:absolute;left:62.5px;top:455.2px;height:21px;">                   <span class="a">onClick =</span> {</div>
<div class="code" style="position:absolute;left:62.5px;top:476.19999999999993px;height:21px;">                       <span class="u">count</span>.<span class="p u">value</span> = <span class="n">0</span></div>
<div class="code" style="position:absolute;left:62.5px;top:497.19999999999993px;height:21px;">                    }) {<span class="hint" style="width:104px"><span class="hb">this: RowScope</span></span></div>
<div class="code" style="position:absolute;left:62.5px;top:518.1999999999999px;height:21px;">                <i class="st">Text</i>(<span class="hint" style="width:43px"><span class="hb">text:</span></span><span class="s">"Reset"</span>)</div>
<div class="code" style="position:absolute;left:62.5px;top:539.1999999999999px;height:21px;">            }</div>
<div class="code" style="position:absolute;left:62.5px;top:560.1999999999999px;height:21px;">        }</div>
<div class="code" style="position:absolute;left:62.5px;top:581.1999999999999px;height:21px;">    }</div>
<div class="code" style="position:absolute;left:62.5px;top:602.1999999999999px;height:21px;">}</div>
<div class="code" style="position:absolute;left:62.5px;top:623.1999999999999px;height:21px;"></div>
<div style="position:absolute;left:697.8px;top:86.4px;width:7px;height:612px;background:#4A4A4A;"></div>
<div style="position:absolute;left:693.8px;top:60.99999999999999px;width:17px;height:2px;background:#35702F;"></div>
<div style="position:absolute;left:691.8px;top:295.2px;width:17px;height:2px;background:#A8882A;"></div>
<div style="position:absolute;left:691.8px;top:419.0px;width:17px;height:2px;background:#A8882A;"></div>
<div style="position:absolute;left:691.8px;top:526.1999999999999px;width:17px;height:2px;background:#A8882A;"></div>
<div style="position:absolute;left:692.8px;top:328.79999999999995px;width:16px;height:2.5px;background:#2F5040;"></div>
<svg style="position:absolute;left:637.6000000000001px;top:6.399999999999999px" width="13" height="13" viewBox="0 0 14 14"><path d="M7 0.800L13.500 12.800H0.500z" fill="#E8B82F"/><rect x="6.200" y="4.500" width="1.600" height="4.500" fill="#2B2B2B"/><rect x="6.200" y="10" width="1.600" height="1.600" fill="#2B2B2B"/></svg>
<div class="ui" style="position:absolute;left:652.0px;top:3.3999999999999986px;height:20px;line-height:20px;color:#BBBBBB;font-size:13.500px;">3</div>
<svg style="position:absolute;left:667.2px;top:7.399999999999999px" width="14" height="12" viewBox="0 0 14 12"><path d="M2.500 8.500L7 4l4.500 4.500" fill="none" stroke="#AFB1B3" stroke-width="1.600"/></svg>
<svg style="position:absolute;left:688.8px;top:7.399999999999999px" width="14" height="12" viewBox="0 0 14 12"><path d="M2.500 3.500L7 8l4.500-4.500" fill="none" stroke="#AFB1B3" stroke-width="1.600"/></svg>
</div>
<div style="position:absolute;left:1080px;top:25px;width:0px;height:753.5px;background:#323232;"></div>
<div style="position:absolute;left:1080px;top:25px;width:335px;height:753.5px;background:#3C3F41;"></div>
<div style="position:absolute;left:1080px;top:25.6px;width:335px;height:25.6px;background:#3B4A5A;"></div>
<div class="ui" style="position:absolute;left:1086.4px;top:29.5px;height:20px;line-height:20px;color:#D0D3D6;font-size:14px;white-space:pre;letter-spacing:-0.072px;">Gradle</div>
<svg style="position:absolute;left:1368.0px;top:31.7px;" width="15" height="15" viewBox="0 0 16 16"><rect x="6.0" y="1.3" width="4.0" height="4" transform="rotate(0 8 8)" fill="#C4C8CC"/><rect x="6.0" y="1.3" width="4.0" height="4" transform="rotate(60 8 8)" fill="#C4C8CC"/><rect x="6.0" y="1.3" width="4.0" height="4" transform="rotate(120 8 8)" fill="#C4C8CC"/><rect x="6.0" y="1.3" width="4.0" height="4" transform="rotate(180 8 8)" fill="#C4C8CC"/><rect x="6.0" y="1.3" width="4.0" height="4" transform="rotate(240 8 8)" fill="#C4C8CC"/><rect x="6.0" y="1.3" width="4.0" height="4" transform="rotate(300 8 8)" fill="#C4C8CC"/><circle cx="8" cy="8" r="5.2" fill="#C4C8CC"/><circle cx="8" cy="8" r="1.8" fill="#3B4A5A"/></svg>
<div style="position:absolute;left:1395.2px;top:38px;width:13.5px;height:1.8px;background:#C4C8CC;"></div>
<svg style="position:absolute;left:1087.5px;top:59px;" width="16" height="16" viewBox="0 0 16 16"><path d="M13.500 7A5.600 5.600 0 0 0 3.500 4.500" fill="none" stroke="#AFB1B3" stroke-width="1.800"/><path d="M2.500 9A5.600 5.600 0 0 0 12.500 11.500" fill="none" stroke="#AFB1B3" stroke-width="1.800"/><path d="M1.500 1.500v4.500h4.500z" fill="#AFB1B3"/><path d="M14.500 14.500v-4.500h-4.500z" fill="#AFB1B3"/></svg>
<svg style="position:absolute;left:1114.9px;top:59px;" width="16" height="16" viewBox="0 0 16 16"><path d="M8 2.700v10.600M2.700 8h10.600" stroke="#AFB1B3" stroke-width="2.200"/></svg>
<svg style="position:absolute;left:1139.5px;top:59px;" width="16" height="16" viewBox="0 0 16 16"><path d="M2 8h12" stroke="#5A5D5F" stroke-width="2.200"/></svg>
<div style="position:absolute;left:1163.2px;top:59px;width:1px;height:19px;background:#515456;"></div>
<svg style="position:absolute;left:1172.0px;top:59px;" width="17" height="16" viewBox="0 0 17 16"><path d="M1.500 13C1 8 2.500 4.500 6.500 4.500C8.500 4.500 9.500 5 10.500 6C11 4 12.500 2.500 14 2.800C15.300 3.100 15.300 5 14.200 5.400C13.200 5.800 12.600 5.600 12 6.400C12.400 8 12.200 10 12 13L9.300 13L9.300 10.800L6.200 10.800L6.200 13Z" fill="#AFB1B3"/></svg>
<div style="position:absolute;left:1197.6000000000001px;top:59px;width:1px;height:19px;background:#515456;"></div>
<svg style="position:absolute;left:1205.6000000000001px;top:59px;" width="16" height="16" viewBox="0 0 16 16"><path d="M2 1.800h12M2 14.200h12" stroke="#AFB1B3" stroke-width="1.700"/><path d="M5.300 7h5.400L8 4zM5.300 9h5.400L8 12z" fill="#AFB1B3"/></svg>
<svg style="position:absolute;left:1232.8000000000002px;top:59px;" width="16" height="16" viewBox="0 0 16 16"><path d="M1.500 8h13" stroke="#AFB1B3" stroke-width="1.700"/><path d="M5 1.200h6L8 5zM5 14.800h6L8 11z" fill="#AFB1B3"/></svg>
<svg style="position:absolute;left:1257.6000000000001px;top:59px;" width="17" height="17" viewBox="0 0 17 17"><path d="M1 3h5.2l1.6 2H15v8.5H1z" fill="#9AA7B0"/><rect x="8" y="7.500" width="9" height="9.500" fill="#3C3F41"/><rect x="9" y="8.500" width="3" height="3" fill="#3592C4"/><rect x="13" y="8.500" width="3" height="3" fill="#3592C4"/><rect x="9" y="12.500" width="3" height="3" fill="#3592C4"/><rect x="13" y="12.500" width="3" height="3" fill="#3592C4"/></svg>
<div style="position:absolute;left:1282.4px;top:59px;width:1px;height:19px;background:#515456;"></div>
<svg style="position:absolute;left:1290.4px;top:59px;" width="16" height="16" viewBox="0 0 16 16"><path d="M1 8h4M11 8h4" stroke="#AFB1B3" stroke-width="1.600"/><path d="M6 2.500v11M10 2.500v11" stroke="#AFB1B3" stroke-width="1.900"/></svg>
<div style="position:absolute;left:1314.4px;top:59px;width:1px;height:19px;background:#515456;"></div>
<svg style="position:absolute;left:1324.0px;top:59px;" width="18" height="17" viewBox="0 0 18 17"><path d="M12.500 1.500a4 4 0 0 0-4.300 5.300L1.500 13.500l2 2 6.700-6.700a4 4 0 0 0 5.300-4.300l-2.500 2.500-2.500-.500-.5-2.500z" fill="#AFB1B3"/><path d="M12.500 14h5l-2.500 2.800z" fill="#AFB1B3"/></svg>
<svg style="position:absolute;left:1083.6px;top:86px;" width="16" height="16" viewBox="0 0 16 16"><path d="M4 5.500L8 9.500l4-4" fill="none" stroke="#A4A7A9" stroke-width="1.500"/></svg>
<svg style="position:absolute;left:1105.1px;top:87.2px;" width="14" height="14" viewBox="0 0 16 16"><path d="M1.500 13C1 8 2.500 4.500 6.500 4.500C8.500 4.500 9.500 5 10.500 6C11 4 12.500 2.500 14 2.800C15.300 3.100 15.300 5 14.200 5.400C13.200 5.800 12.600 5.600 12 6.400C12.400 8 12.200 10 12 13L9.300 13L9.300 10.800L6.200 10.800L6.200 13Z" fill="#AFB1B3"/></svg>
<div class="ui" style="position:absolute;left:1123.1999999999998px;top:83.6px;height:20px;line-height:20px;color:#BBBBBB;font-size:14px;white-space:pre;letter-spacing:0.249px;">get_started</div>
<svg style="position:absolute;left:1101.6px;top:106px;" width="16" height="16" viewBox="0 0 16 16"><path d="M4 5.500L8 9.500l4-4" fill="none" stroke="#A4A7A9" stroke-width="1.500"/></svg>
<svg style="position:absolute;left:1122.3999999999999px;top:106px;overflow:visible" width="17" height="18" viewBox="0 0 17 18"><path d="M0 1.500h6l1.500 2H16.500V12.500H0z" fill="#9AA7B0"/><circle cx="12" cy="11.800" r="5.700" fill="#3C3F41"/><circle cx="12" cy="11.800" r="3.400" fill="none" stroke="#3BA9D0" stroke-width="2.300"/></svg>
<div class="ui" style="position:absolute;left:1141.1999999999998px;top:103.6px;height:20px;line-height:20px;color:#BBBBBB;font-size:14px;white-space:pre;letter-spacing:-0.119px;">Tasks</div>
<svg style="position:absolute;left:1119.6px;top:126px;" width="16" height="16" viewBox="0 0 16 16"><path d="M6 3.500L10 7.500l-4 4" fill="none" stroke="#A4A7A9" stroke-width="1.500"/></svg>
<svg style="position:absolute;left:1140.3999999999999px;top:126px;overflow:visible" width="17" height="18" viewBox="0 0 17 18"><path d="M0 1.500h6l1.500 2H16.500V12.500H0z" fill="#9AA7B0"/><circle cx="12" cy="11.800" r="5.700" fill="#3C3F41"/><circle cx="12" cy="11.800" r="3.400" fill="none" stroke="#3BA9D0" stroke-width="2.300"/></svg>
<div class="ui" style="position:absolute;left:1159.1999999999998px;top:123.6px;height:20px;line-height:20px;color:#BBBBBB;font-size:14px;white-space:pre;letter-spacing:0.385px;">build</div>
<svg style="position:absolute;left:1119.6px;top:146px;" width="16" height="16" viewBox="0 0 16 16"><path d="M6 3.500L10 7.500l-4 4" fill="none" stroke="#A4A7A9" stroke-width="1.500"/></svg>
<svg style="position:absolute;left:1140.3999999999999px;top:146px;overflow:visible" width="17" height="18" viewBox="0 0 17 18"><path d="M0 1.500h6l1.500 2H16.500V12.500H0z" fill="#9AA7B0"/><circle cx="12" cy="11.800" r="5.700" fill="#3C3F41"/><circle cx="12" cy="11.800" r="3.400" fill="none" stroke="#3BA9D0" stroke-width="2.300"/></svg>
<div class="ui" style="position:absolute;left:1159.1999999999998px;top:143.6px;height:20px;line-height:20px;color:#BBBBBB;font-size:14px;white-space:pre;letter-spacing:0.273px;">build setup</div>
<svg style="position:absolute;left:1119.6px;top:166px;" width="16" height="16" viewBox="0 0 16 16"><path d="M4 5.500L8 9.500l4-4" fill="none" stroke="#A4A7A9" stroke-width="1.500"/></svg>
<svg style="position:absolute;left:1140.3999999999999px;top:166px;overflow:visible" width="17" height="18" viewBox="0 0 17 18"><path d="M0 1.500h6l1.500 2H16.500V12.500H0z" fill="#9AA7B0"/><circle cx="12" cy="11.800" r="5.700" fill="#3C3F41"/><circle cx="12" cy="11.800" r="3.400" fill="none" stroke="#3BA9D0" stroke-width="2.300"/></svg>
<div class="ui" style="position:absolute;left:1159.1999999999998px;top:163.6px;height:20px;line-height:20px;color:#BBBBBB;font-size:14px;white-space:pre;letter-spacing:0.13px;">compose desktop</div>
<svg style="position:absolute;left:1158.3999999999999px;top:186px;overflow:visible" width="17" height="18" viewBox="0 0 17 18"><rect x="6.6" y="1.8" width="2.8" height="4" transform="rotate(0 8 8)" fill="#AFB1B3"/><rect x="6.6" y="1.8" width="2.8" height="4" transform="rotate(60 8 8)" fill="#AFB1B3"/><rect x="6.6" y="1.8" width="2.8" height="4" transform="rotate(120 8 8)" fill="#AFB1B3"/><rect x="6.6" y="1.8" width="2.8" height="4" transform="rotate(180 8 8)" fill="#AFB1B3"/><rect x="6.6" y="1.8" width="2.8" height="4" transform="rotate(240 8 8)" fill="#AFB1B3"/><rect x="6.6" y="1.8" width="2.8" height="4" transform="rotate(300 8 8)" fill="#AFB1B3"/><circle cx="8" cy="8" r="4.3" fill="#AFB1B3"/><circle cx="8" cy="8" r="2.1" fill="#3C3F41"/></svg>
<div class="ui" style="position:absolute;left:1177.1999999999998px;top:183.6px;height:20px;line-height:20px;color:#BBBBBB;font-size:14px;white-space:pre;letter-spacing:0.095px;">package</div>
<div style="position:absolute;left:1080px;top:204px;width:335px;height:20px;background:#0C2D48;"></div>
<svg style="position:absolute;left:1158.3999999999999px;top:206px;overflow:visible" width="17" height="18" viewBox="0 0 17 18"><rect x="6.6" y="1.8" width="2.8" height="4" transform="rotate(0 8 8)" fill="#AFB1B3"/><rect x="6.6" y="1.8" width="2.8" height="4" transform="rotate(60 8 8)" fill="#AFB1B3"/><rect x="6.6" y="1.8" width="2.8" height="4" transform="rotate(120 8 8)" fill="#AFB1B3"/><rect x="6.6" y="1.8" width="2.8" height="4" transform="rotate(180 8 8)" fill="#AFB1B3"/><rect x="6.6" y="1.8" width="2.8" height="4" transform="rotate(240 8 8)" fill="#AFB1B3"/><rect x="6.6" y="1.8" width="2.8" height="4" transform="rotate(300 8 8)" fill="#AFB1B3"/><circle cx="8" cy="8" r="4.3" fill="#AFB1B3"/><circle cx="8" cy="8" r="2.1" fill="#0C2D48"/></svg>
<div class="ui" style="position:absolute;left:1177.1999999999998px;top:203.6px;height:20px;line-height:20px;color:#BBBBBB;font-size:14px;white-space:pre;letter-spacing:0.189px;">run</div>
<svg style="position:absolute;left:1119.6px;top:226px;" width="16" height="16" viewBox="0 0 16 16"><path d="M6 3.500L10 7.500l-4 4" fill="none" stroke="#A4A7A9" stroke-width="1.500"/></svg>
<svg style="position:absolute;left:1140.3999999999999px;top:226px;overflow:visible" width="17" height="18" viewBox="0 0 17 18"><path d="M0 1.500h6l1.500 2H16.500V12.500H0z" fill="#9AA7B0"/><circle cx="12" cy="11.800" r="5.700" fill="#3C3F41"/><circle cx="12" cy="11.800" r="3.400" fill="none" stroke="#3BA9D0" stroke-width="2.300"/></svg>
<div class="ui" style="position:absolute;left:1159.1999999999998px;top:223.6px;height:20px;line-height:20px;color:#BBBBBB;font-size:14px;white-space:pre;letter-spacing:0.221px;">documentation</div>
<svg style="position:absolute;left:1119.6px;top:246px;" width="16" height="16" viewBox="0 0 16 16"><path d="M6 3.500L10 7.500l-4 4" fill="none" stroke="#A4A7A9" stroke-width="1.500"/></svg>
<svg style="position:absolute;left:1140.3999999999999px;top:246px;overflow:visible" width="17" height="18" viewBox="0 0 17 18"><path d="M0 1.500h6l1.500 2H16.500V12.500H0z" fill="#9AA7B0"/><circle cx="12" cy="11.800" r="5.700" fill="#3C3F41"/><circle cx="12" cy="11.800" r="3.400" fill="none" stroke="#3BA9D0" stroke-width="2.300"/></svg>
<div class="ui" style="position:absolute;left:1159.1999999999998px;top:243.6px;height:20px;line-height:20px;color:#BBBBBB;font-size:14px;white-space:pre;letter-spacing:0.263px;">help</div>
<svg style="position:absolute;left:1119.6px;top:266px;" width="16" height="16" viewBox="0 0 16 16"><path d="M6 3.500L10 7.500l-4 4" fill="none" stroke="#A4A7A9" stroke-width="1.500"/></svg>
<svg style="position:absolute;left:1140.3999999999999px;top:266px;overflow:visible" width="17" height="18" viewBox="0 0 17 18"><path d="M0 1.500h6l1.500 2H16.500V12.500H0z" fill="#9AA7B0"/><circle cx="12" cy="11.800" r="5.700" fill="#3C3F41"/><circle cx="12" cy="11.800" r="3.400" fill="none" stroke="#3BA9D0" stroke-width="2.300"/></svg>
<div class="ui" style="position:absolute;left:1159.1999999999998px;top:263.6px;height:20px;line-height:20px;color:#BBBBBB;font-size:14px;white-space:pre;letter-spacing:0.24px;">other</div>
<svg style="position:absolute;left:1119.6px;top:286px;" width="16" height="16" viewBox="0 0 16 16"><path d="M6 3.500L10 7.500l-4 4" fill="none" stroke="#A4A7A9" stroke-width="1.500"/></svg>
<svg style="position:absolute;left:1140.3999999999999px;top:286px;overflow:visible" width="17" height="18" viewBox="0 0 17 18"><path d="M0 1.500h6l1.500 2H16.500V12.500H0z" fill="#9AA7B0"/><circle cx="12" cy="11.800" r="5.700" fill="#3C3F41"/><circle cx="12" cy="11.800" r="3.400" fill="none" stroke="#3BA9D0" stroke-width="2.300"/></svg>
<div class="ui" style="position:absolute;left:1159.1999999999998px;top:283.6px;height:20px;line-height:20px;color:#BBBBBB;font-size:14px;white-space:pre;letter-spacing:0.317px;">verification</div>
<svg style="position:absolute;left:1101.6px;top:306px;" width="16" height="16" viewBox="0 0 16 16"><path d="M6 3.500L10 7.500l-4 4" fill="none" stroke="#A4A7A9" stroke-width="1.500"/></svg>
<svg style="position:absolute;left:1122.3999999999999px;top:306px;overflow:visible" width="17" height="18" viewBox="0 0 17 18"><path d="M1 3h5.2l1.6 2H15v8.5H1z" fill="#9AA7B0"/><rect x="7" y="8" width="9" height="8" fill="#3C3F41"/><rect x="8" y="10" width="1.800" height="6" fill="#9AA7B0"/><rect x="10.500" y="9" width="1.800" height="7" fill="#62B543"/><rect x="13" y="9" width="1.800" height="7" fill="#9AA7B0"/></svg>
<div class="ui" style="position:absolute;left:1141.1999999999998px;top:303.6px;height:20px;line-height:20px;color:#BBBBBB;font-size:14px;white-space:pre;letter-spacing:0.1px;">Dependencies</div>
<div style="position:absolute;left:1415px;top:25px;width:20.200000000000045px;height:753.5px;background:#3C3F41;"></div>
<div style="position:absolute;left:1415px;top:25px;width:20.200000000000045px;height:70.5px;background:#2D2F30;"></div>
<svg style="position:absolute;left:1417.5px;top:33px;" width="16" height="16" viewBox="0 0 16 16"><path d="M1.500 13C1 8 2.500 4.500 6.500 4.500C8.500 4.500 9.500 5 10.500 6C11 4 12.500 2.500 14 2.800C15.300 3.100 15.300 5 14.200 5.400C13.200 5.800 12.600 5.600 12 6.400C12.400 8 12.200 10 12 13L9.300 13L9.300 10.800L6.200 10.800L6.200 13Z" fill="#C8CACC"/></svg>
<div class="ui" style="position:absolute;left:1425px;top:52px;height:20px;line-height:20px;margin-top:-10px;transform-origin:0 50%;transform:rotate(90deg);color:#E0E0E0;font-size:11px;white-space:pre;font-weight:bold;letter-spacing:0.1px;">Gradle</div>
<svg style="position:absolute;left:1418.5px;top:107px;" width="13" height="14" viewBox="0 0 13 14"><ellipse cx="6.500" cy="7.500" rx="3" ry="4.500" fill="#AFB1B3"/><circle cx="6.500" cy="2.500" r="2" fill="#AFB1B3"/><path d="M0.500 4.500l3 2M12.500 4.500l-3 2M0.500 8h3M12.500 8h-3M0.500 12.500l3-2M12.500 12.500l-3-2" stroke="#AFB1B3" stroke-width="1.200"/></svg>
<div class="ui" style="position:absolute;left:1425px;top:124.5px;height:20px;line-height:20px;margin-top:-10px;transform-origin:0 50%;transform:rotate(90deg);color:#CCCCCC;font-size:11.5px;white-space:pre;letter-spacing:0.1px;">Ant</div>
<div style="position:absolute;left:0px;top:778px;width:1435.2px;height:22px;background:#3C3F41;"></div>
<div style="position:absolute;left:0px;top:777.6px;width:1435.2px;height:1.2px;background:#34373A;"></div>
<svg style="position:absolute;left:30px;top:783.5px;" width="10" height="11" viewBox="0 0 10 11"><path d="M1 0.500L9.500 5.500 1 10.500z" fill="#AFB1B3"/></svg>
<div class="ui" style="position:absolute;left:46px;top:779px;height:20px;line-height:20px;color:#BBBBBB;font-size:12.5px;white-space:pre;letter-spacing:-0.381px;"><span style="text-decoration:underline">4</span>: Run</div>
<svg style="position:absolute;left:103px;top:783.5px;" width="11" height="11" viewBox="0 0 11 11"><rect x="0" y="0.500" width="2.500" height="2.500" fill="#AFB1B3"/><rect x="3.500" y="0.500" width="7.500" height="2.500" fill="#AFB1B3"/><rect x="0" y="4.200" width="2.500" height="2.500" fill="#AFB1B3"/><rect x="3.500" y="4.200" width="7.500" height="2.500" fill="#AFB1B3"/><rect x="0" y="7.900" width="2.500" height="2.500" fill="#AFB1B3"/><rect x="3.500" y="7.900" width="7.500" height="2.500" fill="#AFB1B3"/></svg>
<div class="ui" style="position:absolute;left:119px;top:779px;height:20px;line-height:20px;color:#BBBBBB;font-size:12.5px;white-space:pre;letter-spacing:-1.053px;">TODO</div>
<svg style="position:absolute;left:172.5px;top:783.5px;" width="11" height="11" viewBox="0 0 11 11"><circle cx="5.500" cy="5.500" r="5.300" fill="#AFB1B3"/><rect x="4.700" y="2.200" width="1.600" height="4.200" fill="#3C3F41"/><rect x="4.700" y="7.300" width="1.600" height="1.600" fill="#3C3F41"/></svg>
<div class="ui" style="position:absolute;left:188.8px;top:779px;height:20px;line-height:20px;color:#BBBBBB;font-size:12.5px;white-space:pre;letter-spacing:-0.202px;"><span style="text-decoration:underline">6</span>: Problems</div>
<svg style="position:absolute;left:275px;top:783.5px;" width="12" height="11" viewBox="0 0 12 11"><rect x="0" y="0" width="12" height="11" rx="1" fill="#AFB1B3"/><path d="M2 2.500l3 2.500-3 2.500" stroke="#3C3F41" stroke-width="1.300" fill="none"/><rect x="6" y="7.500" width="4" height="1.200" fill="#3C3F41"/></svg>
<div class="ui" style="position:absolute;left:292.3px;top:779px;height:20px;line-height:20px;color:#BBBBBB;font-size:12.5px;white-space:pre;letter-spacing:-0.386px;">Terminal</div>
<svg style="position:absolute;left:356px;top:782.5px;" width="14" height="14" viewBox="0 0 14 14"><path d="M1.500 4.500L5 1l3 1.500L6.500 4 13 10.500l-2 2L4.500 6 3 7.500z" fill="#AFB1B3"/></svg>
<div class="ui" style="position:absolute;left:374px;top:779px;height:20px;line-height:20px;color:#BBBBBB;font-size:12.5px;white-space:pre;letter-spacing:-0.183px;">Build</div>
<svg style="position:absolute;left:1332.5px;top:782.5px;" width="13" height="13" viewBox="0 0 13 13"><path d="M6.500 1a5.500 5.500 0 1 0 3 10.100l2.500.9-.8-2.500A5.500 5.500 0 0 0 6.500 1z" fill="none" stroke="#AFB1B3" stroke-width="1.400"/></svg>
<div class="ui" style="position:absolute;left:1350px;top:779px;height:20px;line-height:20px;color:#BBBBBB;font-size:12.5px;white-space:pre;letter-spacing:-0.211px;">Event Log</div>
</div></div></body></html>
